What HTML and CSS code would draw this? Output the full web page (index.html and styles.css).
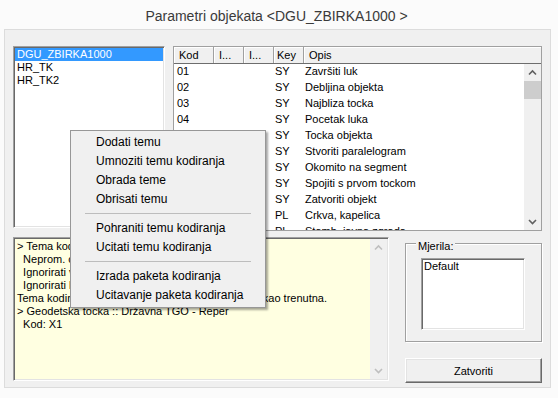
FILE: index.html
```html
<!DOCTYPE html>
<html lang="hr">
<head>
    <meta charset="UTF-8">
    <title>Parametri objekata</title>
    <link rel="stylesheet" href="styles.css">
</head>
<body>
    <div class="title">Parametri objekata &lt;DGU_ZBIRKA1000 &gt;</div>

    <div class="panel">
        <div class="top-row">
            <ul class="theme-list sunken">
                <li class="selected">DGU_ZBIRKA1000</li>
                <li>HR_TK</li>
                <li>HR_TK2</li>
            </ul>

            <div class="codes">
                <div class="codes-head">
                    <span>Kod</span>
                    <span>I...</span>
                    <span>I...</span>
                    <span class="key">Key</span>
                    <span>Opis</span>
                </div>
                <div class="codes-main">
                    <div class="codes-body">
                        <div class="row"><span>01</span><span></span><span></span><span class="key">SY</span><span class="opis">Završiti luk</span></div>
                        <div class="row"><span>02</span><span></span><span></span><span class="key">SY</span><span class="opis">Debljina objekta</span></div>
                        <div class="row"><span>03</span><span></span><span></span><span class="key">SY</span><span class="opis">Najbliza tocka</span></div>
                        <div class="row"><span>04</span><span></span><span></span><span class="key">SY</span><span class="opis">Pocetak luka</span></div>
                        <div class="row"><span>05</span><span></span><span></span><span class="key">SY</span><span class="opis">Tocka objekta</span></div>
                        <div class="row"><span>06</span><span></span><span></span><span class="key">SY</span><span class="opis">Stvoriti paralelogram</span></div>
                        <div class="row"><span>07</span><span></span><span></span><span class="key">SY</span><span class="opis">Okomito na segment</span></div>
                        <div class="row"><span>08</span><span></span><span></span><span class="key">SY</span><span class="opis">Spojiti s prvom tockom</span></div>
                        <div class="row"><span>09</span><span></span><span></span><span class="key">SY</span><span class="opis">Zatvoriti objekt</span></div>
                        <div class="row"><span>10</span><span></span><span></span><span class="key">PL</span><span class="opis">Crkva, kapelica</span></div>
                        <div class="row"><span>11</span><span></span><span></span><span class="key">PL</span><span class="opis">Stamb. javna zgrada</span></div>
                    </div>
                    <div class="vscroll">
                        <svg class="arrow" width="17" height="17" viewBox="0 0 17 17"><polyline points="5,10.5 8.5,7 12,10.5" /></svg>
                        <div class="thumb"></div>
                        <div class="track"></div>
                        <svg class="arrow" width="17" height="17" viewBox="0 0 17 17"><polyline points="5,7 8.5,10.5 12,7" /></svg>
                    </div>
                </div>
            </div>
        </div>

        <div class="bottom-row">
            <div class="info sunken">
                <div class="info-text">&gt; Tema kodiranja: DGU_ZBIRKA1000
  Neprom. objekti: 0
  Ignorirati visinu: Ne
  Ignorirati kodove: Ne
Tema kodiranja DGU_ZBIRKA1000 je postavljena kao trenutna.
&gt; Geodetska tocka :: Državna TGO - Reper
  Kod: X1</div>
                <div class="vscroll disabled">
                    <svg class="arrow" width="17" height="17" viewBox="0 0 17 17"><polyline points="5,10.5 8.5,7 12,10.5" /></svg>
                    <div class="track"></div>
                    <svg class="arrow" width="17" height="17" viewBox="0 0 17 17"><polyline points="5,7 8.5,10.5 12,7" /></svg>
                </div>
            </div>

            <div class="side">
                <div class="group">
                    <span class="group-title">Mjerila:</span>
                    <ul class="scale-list sunken">
                        <li>Default</li>
                    </ul>
                </div>
                <button class="close-btn">Zatvoriti</button>
            </div>
        </div>

        <!-- kontekstni izbornik iznad liste tema -->
        <div class="context-menu">
            <div class="menu-item">Dodati temu</div>
            <div class="menu-item">Umnoziti temu kodiranja</div>
            <div class="menu-item">Obrada teme</div>
            <div class="menu-item">Obrisati temu</div>
            <div class="menu-sep"></div>
            <div class="menu-item">Pohraniti temu kodiranja</div>
            <div class="menu-item">Ucitati temu kodiranja</div>
            <div class="menu-sep"></div>
            <div class="menu-item">Izrada paketa kodiranja</div>
            <div class="menu-item">Ucitavanje paketa kodiranja</div>
        </div>
    </div>
</body>
</html>
```

FILE: styles.css
```css
* { box-sizing: border-box; }

body {
    margin: 0;
    width: 558px;
    height: 398px;
    overflow: hidden;
    background: #fbfbfb;
    font-family: "Liberation Sans", Arial, sans-serif;
    font-size: 11px;
    color: #000;
}

ul { list-style: none; margin: 0; padding: 0; }

.title {
    height: 29px;
    line-height: 32px;
    text-align: center;
    padding-right: 5px;
    font-size: 14px;
    color: #3a3a3a;
}

.panel {
    position: relative;
    margin: 0 7px 0 4px;
    height: 359px;
    padding: 16px 8px 0 8px;
    border: 1px solid #dcdcdc;
    background: #f0f0f0;
}

/* udubljeni rub (klasicni Windows stil) */
.sunken {
    border: 1px solid;
    border-color: #a0a0a0 #fff #fff #a0a0a0;
    box-shadow: inset 1px 1px #696969, inset -1px -1px #e3e3e3;
    padding: 1px;
    background: #fff;
}

.top-row {
    display: flex;
    gap: 8px;
    align-items: flex-start;
}

.theme-list {
    width: 152px;
    height: 182px;
}

.theme-list li {
    height: 13px;
    line-height: 13px;
    padding-left: 2px;
    white-space: nowrap;
}

.theme-list li.selected {
    background: #3399ff;
    color: #fff;
}

.codes {
    width: 369px;
    height: 185px;
    border: 1px solid #a0a0a0;
    background: #fff;
    display: flex;
    flex-direction: column;
}

.codes-head {
    display: grid;
    grid-template-columns: 40px 30px 30px 30px 1fr;
    height: 17px;
    background: #f0f0f0;
    border-bottom: 1px solid #6d6d6d;
}

.codes-head span {
    height: 16px;
    line-height: 16px;
    padding-left: 5px;
    border-right: 1px solid #a0a0a0;
    box-shadow: inset 1px 1px #fff;
    overflow: hidden;
    white-space: nowrap;
}

.codes-head span.key { padding-left: 3px; }
.codes-head span:last-child { border-right: none; }

.codes-main {
    flex: 1;
    display: flex;
    min-height: 0;
}

.codes-body {
    flex: 1;
    overflow: hidden;
}

.row {
    display: grid;
    grid-template-columns: 40px 30px 30px 30px 1fr;
    height: 16px;
    line-height: 15px;
    white-space: nowrap;
}

.row span { padding-left: 3px; overflow: hidden; }
.row span.key { padding-left: 1px; }
.row span.opis { padding-left: 1px; }

.vscroll {
    width: 17px;
    background: #f0f0f0;
    display: flex;
    flex-direction: column;
}

.vscroll .arrow { display: block; flex: none; }

.vscroll .arrow polyline {
    fill: none;
    stroke: #606060;
    stroke-width: 1.6;
}

.vscroll.disabled .arrow polyline { stroke: #bfbfbf; }

.vscroll .thumb {
    height: 18px;
    background: #cdcdcd;
}

.vscroll .track { flex: 1; }

.bottom-row {
    display: flex;
    gap: 16px;
    margin-top: 6px;
    align-items: flex-start;
}

.info {
    width: 376px;
    height: 144px;
    display: flex;
    background: #ffffe1;
}

.info-text {
    flex: 1;
    padding: 1px 0 0 2px;
    line-height: 13px;
    white-space: pre;
    overflow: hidden;
}

.side {
    width: 137px;
    padding-top: 6px;
    display: flex;
    flex-direction: column;
    gap: 16px;
}

.group {
    height: 99px;
    padding: 0 15px;
    border: 1px solid #a0a0a0;
    box-shadow: inset 1px 1px #fff, 1px 1px #fff;
}

.group-title {
    display: block;
    width: fit-content;
    margin: -4px 0 0 -5px;
    padding: 0 2px;
    line-height: 13px;
    background: #f0f0f0;
}

.scale-list {
    margin-top: 5px;
    width: 104px;
    height: 72px;
}

.scale-list li {
    height: 13px;
    line-height: 13px;
    padding-left: 1px;
}

.close-btn {
    width: 137px;
    height: 25px;
    margin: 0;
    padding: 0;
    font: inherit;
    color: #000;
    background: #f0f0f0;
    border: 1px solid;
    border-color: #fff #696969 #696969 #fff;
    box-shadow: inset -1px -1px #a0a0a0, inset 1px 1px #e3e3e3;
}

.context-menu {
    position: absolute;
    left: 65px;
    top: 100px;
    width: 196px;
    padding: 2px 0;
    background: #f0f0f0;
    border: 1px solid #979797;
    box-shadow: 2px 2px 2px rgba(0, 0, 0, 0.35);
    font-size: 12px;
}

.menu-item {
    height: 19px;
    line-height: 19px;
    padding-left: 25px;
    white-space: nowrap;
}

.menu-sep {
    height: 10px;
    padding-top: 4px;
    margin: 0 14px 0 14px;
}

.menu-sep::after {
    content: "";
    display: block;
    border-top: 1px solid #bdbdbd;
}
```
